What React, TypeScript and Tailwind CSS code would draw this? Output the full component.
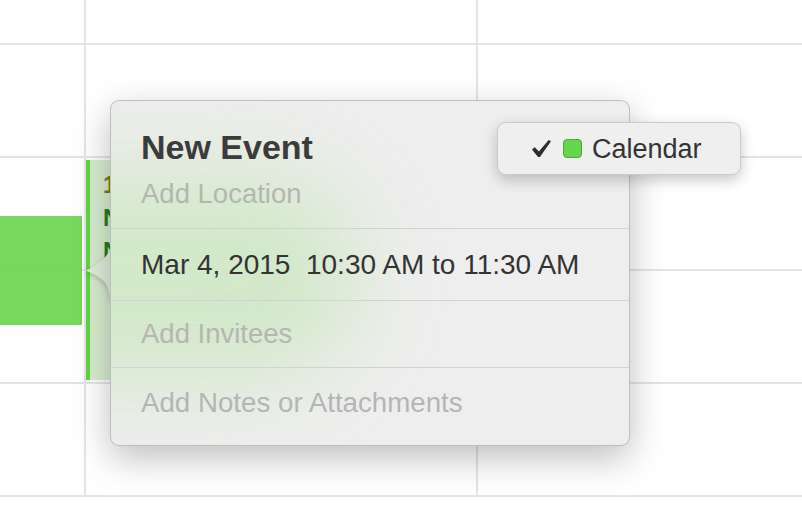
import React from 'react';

const font = "font-['Liberation_Sans',Arial,sans-serif]";

// one horizontal band of the calendar grid
const GridRow: React.FC<{ first?: boolean }> = ({ first }) => (
  <div className={`flex border-b-2 border-[#e4e4e4] ${first ? 'h-[45px]' : 'h-[113px]'}`}>
    <div className="w-[86px] border-r-2 border-[#e4e4e4]" />
    <div className="w-[392px] border-r-2 border-[#e4e4e4]" />
    <div className="flex-1" />
  </div>
);

const CheckMark = () => (
  <svg width="19" height="17" viewBox="0 0 19 17" className="shrink-0">
    <polygon points="0,9.6 2.8,7.2 6.9,11.6 16.7,0 19,1.3 7.9,17 6,17" fill="#2c2c2c" />
  </svg>
);

const CalendarPicker = () => (
  <div className="absolute left-[387px] top-[22px] w-[244px] h-[53px] rounded-[9px] bg-[#efefef] border border-black/15 shadow-[0_5px_14px_rgba(0,0,0,0.22)] flex items-center pl-[34px]">
    <CheckMark />
    <div className="ml-[12px] w-[19px] h-[19px] rounded-[4px] bg-[#66d54b] border border-[#4da937]" />
    <span className="ml-[10px] text-[27px] leading-[32px] text-[#333333]">Calendar</span>
  </div>
);

const EventPopover = () => (
  <div className="absolute left-[110px] top-[100px] w-[520px]">
    {/* arrow pointing at the event */}
    <svg
      width="26"
      height="50"
      viewBox="0 0 26 50"
      className="absolute left-[-24px] top-[149px] drop-shadow-[-1px_2px_2px_rgba(0,0,0,0.18)]"
    >
      <path d="M26 0 L24 0 C21 9 9 18 0 21.5 C8 25 18 30 21 37 C23 42 23.5 46 24 50 L26 50 Z" fill="#e0eeda" />
    </svg>

    <div className="relative rounded-[9px] border border-black/20 bg-[#eeeeee] shadow-[0_12px_36px_rgba(0,0,0,0.26)] overflow-hidden">
      {/* event colour showing through the translucent panel */}
      <div className="absolute left-[-170px] top-[70px] w-[420px] h-[210px] rounded-full bg-[#cbe7bf] opacity-80 blur-[45px]" />

      <div className="relative">
        <div className="px-[30px] pt-[26px] pb-[18px]">
          <div className="text-[34px] leading-[40px] font-bold text-[#3b3b3b]">New Event</div>
          <div className="mt-[11px] text-[27.5px] leading-[32px] text-[#b4b6b2]">Add Location</div>
        </div>
        <div className="h-px bg-[#d2d2d2]" />
        <div className="h-[71px] flex items-center px-[30px]">
          <span className="text-[28px] leading-[32px] text-[#333333] whitespace-pre">Mar 4, 2015  10:30 AM to 11:30 AM</span>
        </div>
        <div className="h-px bg-[#d2d2d2]" />
        <div className="h-[66px] flex items-center px-[30px]">
          <span className="text-[27.5px] leading-[32px] text-[#b5b6b3]">Add Invitees</span>
        </div>
        <div className="h-px bg-[#d2d2d2]" />
        <div className="px-[30px] pt-[19px] pb-[26px]">
          <span className="text-[27.7px] leading-[32px] text-[#b5b5b5]">Add Notes or Attachments</span>
        </div>
      </div>
    </div>

    <CalendarPicker />
  </div>
);

export default function App() {
  return (
    <div className={`relative w-[802px] h-[522px] overflow-hidden bg-white ${font}`}>
      <GridRow first />
      <GridRow />
      <GridRow />
      <GridRow />
      <GridRow />

      <div className="absolute left-0 top-[216px] w-[82px] h-[109px] bg-[rgba(104,213,73,0.9)]" />
      <div className="absolute left-[86px] top-[160px] w-[390px] h-[220px] bg-[#d7edcf] border-l-4 border-[#5fd544] pl-[13px] pt-[8px]">
        {/* only the sliver left of the popover is visible */}
        <div className="w-[7px] overflow-hidden whitespace-nowrap">
          <div className="text-[24px] leading-[33px] font-bold text-[#7c7a14]">10:30 AM</div>
          <div className="text-[24px] leading-[33px] font-bold text-[#1f7d1c]">New Event</div>
          <div className="text-[24px] leading-[33px] font-bold text-[#1f7d1c]">New Event</div>
        </div>
      </div>

      <EventPopover />
    </div>
  );
}
